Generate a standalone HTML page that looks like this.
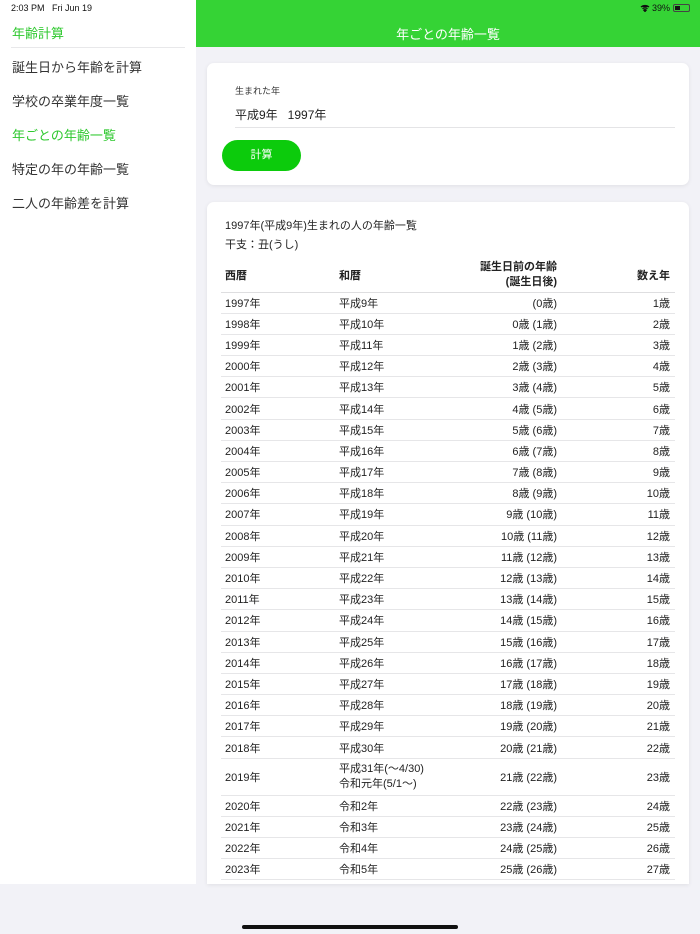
<!DOCTYPE html>
<html><head><meta charset="utf-8">
<style>
*{margin:0;padding:0;box-sizing:border-box}
body{width:700px;height:934px;overflow:hidden;background:#f2f2f7;font-family:"Liberation Sans","Noto Sans CJK JP",sans-serif;color:#222;position:relative}
.side{position:absolute;left:0;top:0;width:196px;height:884px;background:#fff}
.time{position:absolute;left:11px;top:3px;font-size:9px;color:#111}
.apptitle{position:absolute;left:12px;top:23px;font-size:13px;color:#2ec82e}
.sep{position:absolute;left:11px;top:47px;width:174px;height:1px;background:#e8e8ea}
.nav{position:absolute;left:12px;font-size:13px;color:#333}
.hdr{position:absolute;left:196px;top:0;width:504px;height:47px;background:#35d335}
.hdr .t{position:absolute;left:0;right:0;top:24px;text-align:center;color:#fff;font-size:13px}
.stat{position:absolute;right:10px;top:3px;font-size:9px;color:#111;display:flex;align-items:center;gap:2px}
.card{position:absolute;left:207px;width:482px;background:#fff;border-radius:7px;box-shadow:0 1px 4px rgba(0,0,0,.08)}
.lbl{position:absolute;left:28px;top:21px;font-size:9px;color:#333}
.val{position:absolute;left:28px;top:43px;font-size:12px;color:#222}
.uline{position:absolute;left:28px;right:14px;top:64px;height:1px;background:#e4e4e6}
.btn{position:absolute;left:15px;top:77px;width:79px;height:31px;border-radius:16px;background:#0ccb0c;color:#fff;font-size:11px;text-align:center;line-height:31px}
.txt{position:absolute;left:18px;font-size:11px;color:#222}
table{position:absolute;left:14px;top:56px;width:454px;border-collapse:collapse;font-size:11px;color:#222}
th{font-weight:bold;height:34px;border-bottom:1.5px solid #dedee0;font-size:11px;text-align:left}
td{height:21.2px;border-bottom:1.5px solid #e6e6e8;padding:0}
td:first-child,th:first-child{padding-left:4px;width:118px}
td:nth-child(2),th:nth-child(2){width:130px}
td:nth-child(3),th:nth-child(3){text-align:right;width:88px}
td:nth-child(4),th:nth-child(4){text-align:right;padding-right:5px}
.bar{position:absolute;left:242px;top:925px;width:216px;height:4px;border-radius:2px;background:#111}
</style></head><body>
<div class="side">
<div class="time">2:03 PM&nbsp;&nbsp;&nbsp;Fri Jun 19</div>
<div class="apptitle">年齢計算</div>
<div class="sep"></div>
<div class="nav" style="top:57px">誕生日から年齢を計算</div>
<div class="nav" style="top:91px">学校の卒業年度一覧</div>
<div class="nav" style="top:125px;color:#2ec82e">年ごとの年齢一覧</div>
<div class="nav" style="top:159px">特定の年の年齢一覧</div>
<div class="nav" style="top:193px">二人の年齢差を計算</div>
</div>
<div class="hdr"><div class="t">年ごとの年齢一覧</div>
<div class="stat"><svg width="10" height="8" viewBox="0 0 10 8"><path d="M1 3a6 6 0 0 1 8 0M2.5 4.6a4 4 0 0 1 5 0M5 7.5 3.8 6.1a2 2 0 0 1 2.4 0z" stroke="#111" stroke-width="1.3" fill="#111"/></svg>39%<span style="display:inline-block;width:17px;height:8px;border:1px solid #444;border-radius:2px;position:relative;margin-left:1px"><span style="position:absolute;left:1px;top:1px;width:5px;height:4px;background:#111"></span></span></div>
</div>
<div class="card" style="top:63px;height:122px">
<div class="lbl">生まれた年</div>
<div class="val">平成9年&nbsp;&nbsp;&nbsp;1997年</div>
<div class="uline"></div>
<div class="btn">計算</div>
</div>
<div class="card" style="top:202px;height:682px;border-radius:7px 7px 0 0">
<div class="txt" style="top:15px">1997年(平成9年)生まれの人の年齢一覧</div>
<div class="txt" style="top:34px">干支：丑(うし)</div>
<table>
<tr><th>西暦</th><th>和暦</th><th style="line-height:15px">誕生日前の年齢<br>(誕生日後)</th><th>数え年</th></tr>
<tr><td>1997年</td><td>平成9年</td><td>(0歳)</td><td>1歳</td></tr>
<tr><td>1998年</td><td>平成10年</td><td>0歳 (1歳)</td><td>2歳</td></tr>
<tr><td>1999年</td><td>平成11年</td><td>1歳 (2歳)</td><td>3歳</td></tr>
<tr><td>2000年</td><td>平成12年</td><td>2歳 (3歳)</td><td>4歳</td></tr>
<tr><td>2001年</td><td>平成13年</td><td>3歳 (4歳)</td><td>5歳</td></tr>
<tr><td>2002年</td><td>平成14年</td><td>4歳 (5歳)</td><td>6歳</td></tr>
<tr><td>2003年</td><td>平成15年</td><td>5歳 (6歳)</td><td>7歳</td></tr>
<tr><td>2004年</td><td>平成16年</td><td>6歳 (7歳)</td><td>8歳</td></tr>
<tr><td>2005年</td><td>平成17年</td><td>7歳 (8歳)</td><td>9歳</td></tr>
<tr><td>2006年</td><td>平成18年</td><td>8歳 (9歳)</td><td>10歳</td></tr>
<tr><td>2007年</td><td>平成19年</td><td>9歳 (10歳)</td><td>11歳</td></tr>
<tr><td>2008年</td><td>平成20年</td><td>10歳 (11歳)</td><td>12歳</td></tr>
<tr><td>2009年</td><td>平成21年</td><td>11歳 (12歳)</td><td>13歳</td></tr>
<tr><td>2010年</td><td>平成22年</td><td>12歳 (13歳)</td><td>14歳</td></tr>
<tr><td>2011年</td><td>平成23年</td><td>13歳 (14歳)</td><td>15歳</td></tr>
<tr><td>2012年</td><td>平成24年</td><td>14歳 (15歳)</td><td>16歳</td></tr>
<tr><td>2013年</td><td>平成25年</td><td>15歳 (16歳)</td><td>17歳</td></tr>
<tr><td>2014年</td><td>平成26年</td><td>16歳 (17歳)</td><td>18歳</td></tr>
<tr><td>2015年</td><td>平成27年</td><td>17歳 (18歳)</td><td>19歳</td></tr>
<tr><td>2016年</td><td>平成28年</td><td>18歳 (19歳)</td><td>20歳</td></tr>
<tr><td>2017年</td><td>平成29年</td><td>19歳 (20歳)</td><td>21歳</td></tr>
<tr><td>2018年</td><td>平成30年</td><td>20歳 (21歳)</td><td>22歳</td></tr>
<tr><td style="height:37px">2019年</td><td style="line-height:15px">平成31年(～4/30)<br>令和元年(5/1～)</td><td>21歳 (22歳)</td><td>23歳</td></tr>
<tr><td>2020年</td><td>令和2年</td><td>22歳 (23歳)</td><td>24歳</td></tr>
<tr><td>2021年</td><td>令和3年</td><td>23歳 (24歳)</td><td>25歳</td></tr>
<tr><td>2022年</td><td>令和4年</td><td>24歳 (25歳)</td><td>26歳</td></tr>
<tr><td>2023年</td><td>令和5年</td><td>25歳 (26歳)</td><td>27歳</td></tr>
</table>
</div>
<div class="bar"></div>
</body></html>
